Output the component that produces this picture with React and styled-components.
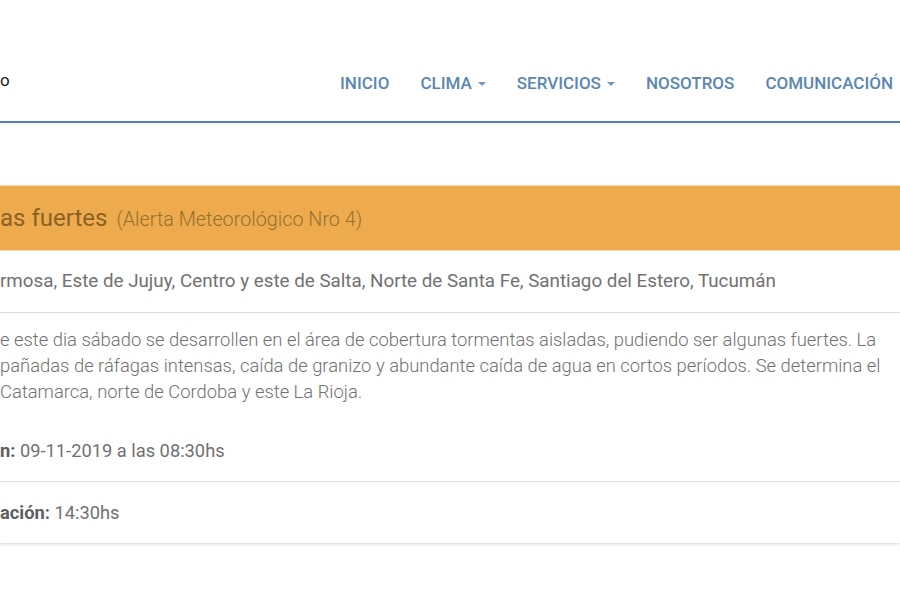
import React from 'react'
import styled, { createGlobalStyle } from 'styled-components'

const Global = createGlobalStyle`
  html, body {
    margin: 0;
    padding: 0;
    background: #ffffff;
    overflow: hidden;
  }
  body {
    font-family: Roboto, "Liberation Sans", Arial, sans-serif;
    width: 900px;
    height: 600px;
  }
`

const Header = styled.header`
  display: flex;
  align-items: flex-start;
  justify-content: space-between;
  height: 121px;
  border-bottom: 2px solid #5580a8;
  box-shadow: 0 2px 6px rgba(80, 120, 160, 0.08);
`

const Brand = styled.div`
  font-size: 17px;
  line-height: 20px;
  color: #222;
  padding-top: 70px;
  white-space: nowrap;
`

const Nav = styled.nav`
  display: flex;
  align-items: center;
  gap: 31px;
  padding-top: 73px;
  padding-right: 7px;
`

const NavItem = styled.a`
  display: flex;
  align-items: center;
  gap: 6px;
  font-size: 17px;
  line-height: 20px;
  font-weight: 500;
  color: #5a87b1;
  text-transform: uppercase;
  text-decoration: none;
  white-space: nowrap;
`

const Caret = styled.span`
  width: 0;
  height: 0;
  border-left: 4px solid transparent;
  border-right: 4px solid transparent;
  border-top: 4px solid #7597b8;
  margin-top: 2px;
`

const Main = styled.main`
  padding-top: 62px;
`

const Panel = styled.section`
  box-shadow: 0 1px 3px rgba(0, 0, 0, 0.18);
  border-top: 1px solid #f7dcb4;
`

const Heading = styled.div`
  display: flex;
  align-items: baseline;
  gap: 9px;
  height: 65px;
  padding-top: 18px;
  box-sizing: border-box;
  background: #eeab4d;
  border-bottom: 1px solid #f6dcb4;
  white-space: nowrap;
`

const Title = styled.h3`
  margin: 0;
  font-size: 24px;
  line-height: 28px;
  font-weight: 400;
  color: #8a6226;
`

const Subtitle = styled.span`
  font-size: 19.8px;
  font-weight: 300;
  color: #94702f;
`

const Row = styled.div`
  padding: ${(p) => p.$pad || '20px 0'};
  line-height: ${(p) => p.$lh || '21px'};
  font-size: ${(p) => p.$size || '18.3px'};
  font-weight: ${(p) => p.$weight || 400};
  color: #717171;
  border-bottom: ${(p) => (p.$border ? '1px solid #dcdcdc' : 'none')};
  white-space: nowrap;
  overflow: hidden;
`

const Line = styled.div`
  white-space: nowrap;
`

const Label = styled.b`
  font-weight: 700;
  color: #5e5e5e;
`

export default function App() {
  return (
    <>
      <Global />
      <Header>
        <Brand>o</Brand>
        <Nav>
          <NavItem>Inicio</NavItem>
          <NavItem>Clima <Caret /></NavItem>
          <NavItem>Servicios <Caret /></NavItem>
          <NavItem>Nosotros</NavItem>
          <NavItem>Comunicación</NavItem>
        </Nav>
      </Header>
      <Main>
        <Panel>
          <Heading>
            <Title>as fuertes</Title>
            <Subtitle>(Alerta Meteorológico Nro 4)</Subtitle>
          </Heading>
          <Row $border $size="18.8px">
            rmosa, Este de Jujuy, Centro y este de Salta, Norte de Santa Fe, Santiago del Estero, Tucumán
          </Row>
          <Row $pad="14px 0 15px" $lh="26px" $weight={300} $size="18.4px">
            <Line>e este dia sábado se desarrollen en el área de cobertura tormentas aisladas, pudiendo ser algunas fuertes. La</Line>
            <Line>pañadas de ráfagas intensas, caída de granizo y abundante caída de agua en cortos períodos. Se determina el</Line>
            <Line>Catamarca, norte de Cordoba y este La Rioja.</Line>
          </Row>
          <Row $border>
            <Label>n:</Label> 09-11-2019 a las 08:30hs
          </Row>
          <Row>
            <Label>ación:</Label> 14:30hs
          </Row>
        </Panel>
      </Main>
    </>
  )
}
